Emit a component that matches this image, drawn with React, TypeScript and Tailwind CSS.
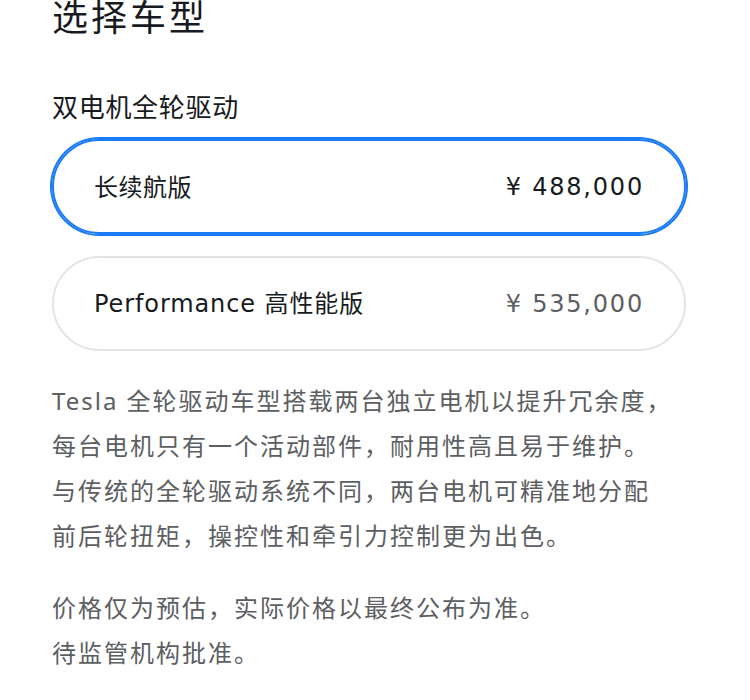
import React from "react";

export default function App() {
  const font = { fontFamily: '"Noto Sans", "Noto Sans CJK SC", sans-serif' };
  const wide = { fontFamily: '"DejaVu Sans", "Noto Sans CJK SC", sans-serif' };
  return (
    <div className="min-h-[700px] w-[750px] bg-white pl-[52px] text-[#171a20]" style={font}>
      <h1 className="text-[36px] leading-[36px] font-normal tracking-[3px]">选择车型</h1>
      <h2 className="mt-[58px] text-[26px] leading-[26px] font-normal tracking-[0.7px]">双电机全轮驱动</h2>
      <div className="mt-[19px] flex w-[634px] flex-col gap-[22px]">
        <div className="flex h-[95px] items-center justify-between rounded-full border-2 border-[#1b7bf4] px-[40px] shadow-[0_0_0_2px_#1b7bf4]">
          <span className="text-[24px] tracking-[0.5px]">长续航版</span>
          <span className="text-[24px] tracking-[1.8px]" style={wide}>¥ 488,000</span>
        </div>
        <div className="flex h-[95px] items-center justify-between rounded-full border-2 border-[#e4e4e4] px-[40px]">
          <span className="text-[24px] tracking-[0.9px]" style={wide}>Performance 高性能版</span>
          <span className="text-[24px] tracking-[1.8px] text-[#5c5e62]" style={wide}>¥ 535,000</span>
        </div>
      </div>
      <p className="mt-[27px] text-[24px] leading-[45px] tracking-[2px] text-[#5c5e62]">
        Tesla 全轮驱动车型搭载两台独立电机以提升冗余度，
        <br />
        每台电机只有一个活动部件，耐用性高且易于维护。
        <br />
        与传统的全轮驱动系统不同，两台电机可精准地分配
        <br />
        前后轮扭矩，操控性和牵引力控制更为出色。
      </p>
      <p className="mt-[27px] text-[24px] leading-[45px] tracking-[2px] text-[#5c5e62]">
        价格仅为预估，实际价格以最终公布为准。
        <br />
        待监管机构批准。
      </p>
    </div>
  );
}
